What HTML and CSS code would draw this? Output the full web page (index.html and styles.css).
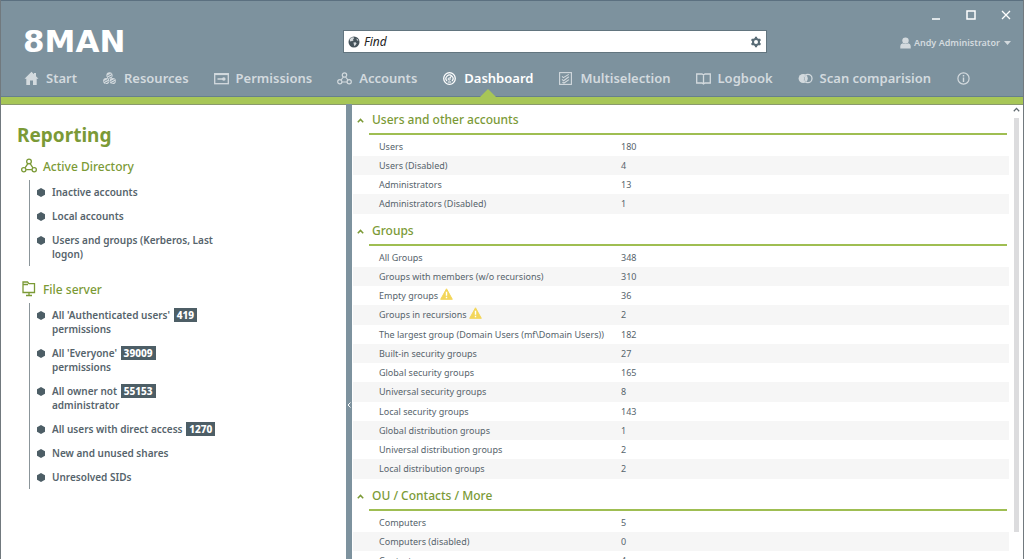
FILE: index.html
```html
<!DOCTYPE html>
<html lang="en">
<head>
    <meta charset="UTF-8">
    <meta name="viewport" content="width=device-width, initial-scale=1.0">
    <title>8MAN - Dashboard</title>
    <link rel="stylesheet" href="styles.css">
</head>
<body>
    <header class="header">
        <div class="window-controls">
            <button type="button" aria-label="Minimize"><svg width="10" height="10" viewBox="0 0 10 10"><path d="M1 9H9" stroke="#fff" stroke-width="1.5"/></svg></button>
            <button type="button" aria-label="Maximize"><svg width="10" height="10" viewBox="0 0 10 10"><rect x="1" y="1" width="8" height="8" fill="none" stroke="#fff" stroke-width="1.5"/></svg></button>
            <button type="button" aria-label="Close"><svg width="10" height="10" viewBox="0 0 10 10"><path d="M1 1L9 9M9 1L1 9" stroke="#fff" stroke-width="1.3"/></svg></button>
        </div>

        <div class="header-row">
            <div class="logo">8MAN</div>
            <form class="search">
                <svg width="12" height="12" viewBox="0 0 12 12"><circle cx="6" cy="6" r="5.5" fill="#46545b"/><path d="M1.5 3.6L3.4 1.4L5.6 1.2L6.2 2.2L5 3.2L5.6 4.2L4 5.2L3 5L2.4 5.8ZM5.4 6.4L7.6 6.2L8.6 7.4L7.2 9.6L6.2 10L5.8 8ZM8.4 2.4L10 3.4L10.4 4.8L9 4.6Z" fill="#d5dadd"/></svg>
                <input type="text" placeholder="Find" aria-label="Find">
                <button type="button" aria-label="Search settings"><svg width="12" height="12" viewBox="0 0 12 12"><g stroke="#596c76" fill="none"><circle cx="6" cy="6" r="3" stroke-width="2"/><path d="M6 .8V3M6 9V11.2M1.5 3.4L3.4 4.5M8.6 7.5L10.5 8.6M1.5 8.6L3.4 7.5M8.6 4.5L10.5 3.4" stroke-width="2.2"/></g></svg></button>
            </form>
            <button type="button" class="user">
                <svg width="11" height="12" viewBox="0 0 11 12"><circle cx="5.5" cy="3.6" r="3.2" fill="#d3dade"/><path d="M.3 11.5V9Q.3 6.6 2.8 6.2Q5.5 8 8.2 6.2Q10.7 6.6 10.7 9V11.5Z" fill="#d3dade"/></svg>
                Andy Administrator
                <svg class="caret" width="7" height="4" viewBox="0 0 7 4"><path d="M0 0H7L3.5 4Z" fill="#d3dade"/></svg>
            </button>
        </div>

        <nav class="nav">
            <a href="#"><svg width="15" height="15" viewBox="0 0 15 15"><path d="M7.5 .8L10 3.2V2H12V5.2L14.5 7.8H12.7V14H9V9.5H6V14H2.3V7.8H.5Z" fill="currentColor"/></svg>Start</a>
            <a href="#"><svg width="15" height="15" viewBox="0 0 15 15"><g fill="currentColor"><circle cx="7.5" cy="4.4" r="3.1"/><circle cx="4.2" cy="10" r="3.1"/><circle cx="10.8" cy="10" r="3.1"/></g><path d="M5.2 5L9.4 2.8M6 6.8L10 4.8M1.8 10.6L6 8.4M2.8 12.4L6.6 10.4M8.4 10.6L12.6 8.4M9.4 12.4L13.2 10.4" stroke="#7d929e" stroke-width=".9"/></svg>Resources</a>
            <a href="#"><svg width="15" height="15" viewBox="0 0 15 15"><rect x=".7" y="2.7" width="13.6" height="10" fill="none" stroke="currentColor" stroke-width="1.3"/><path d="M.5 3.3H14.5" stroke="currentColor" stroke-width="1.6"/><path d="M3.5 8H9" stroke="currentColor" stroke-width="1.5"/><circle cx="9.8" cy="8" r="1.8" fill="currentColor"/></svg>Permissions</a>
            <a href="#"><svg width="15" height="15" viewBox="0 0 15 15"><g fill="none" stroke="currentColor" stroke-width="1.2"><circle cx="7.5" cy="4" r="2.2"/><circle cx="2.8" cy="10.8" r="2.1"/><circle cx="12.2" cy="10.8" r="2.1"/><path d="M6.4 6L4 9M8.6 6L11 9M5 11H10"/></g></svg>Accounts</a>
            <a href="#" class="active"><svg width="15" height="15" viewBox="0 0 15 15"><g fill="none" stroke="currentColor"><circle cx="7.5" cy="7.5" r="5.8" stroke-width="1.3"/><path d="M5 10A3.5 3.5 0 1 1 10 10" stroke-width="1.2"/><circle cx="7.2" cy="8" r="1.1"/><path d="M8 7L9.4 5.2M5.8 11H9.2" stroke-width="1.1"/></g></svg>Dashboard</a>
            <a href="#"><svg width="15" height="15" viewBox="0 0 15 15"><g fill="none" stroke="currentColor" stroke-width="1.1"><rect x="1.6" y="1.6" width="11.8" height="11.8"/><path d="M4 5.4L5.4 6.6L10.8 3.4M4 8.4L5.6 9.8L10.8 5.8M4.4 11.2L6 12L11 8.6"/></g></svg>Multiselection</a>
            <a href="#"><svg width="15" height="15" viewBox="0 0 15 15"><path d="M.7 3H6L7.5 4L9 3H14.3V12H9L7.5 13L6 12H.7ZM7.5 4V13" fill="none" stroke="currentColor" stroke-width="1.3"/></svg>Logbook</a>
            <a href="#"><svg width="15" height="15" viewBox="0 0 15 15"><circle cx="5.2" cy="7.5" r="4.6" fill="currentColor"/><path d="M8 3.5Q6 5 6 7.5T8 11.5" fill="none" stroke="#7d929e" stroke-width="1.2"/><circle cx="9.8" cy="7.5" r="4.2" fill="none" stroke="currentColor" stroke-width="1.3"/></svg>Scan comparision</a>
            <a href="#" aria-label="Info"><svg width="15" height="15" viewBox="0 0 15 15"><circle cx="7.5" cy="7.5" r="5.6" fill="none" stroke="currentColor" stroke-width="1.2"/><path d="M7.5 4V5.4M7.5 6.5V11" stroke="currentColor" stroke-width="1.4"/></svg></a>
        </nav>
    </header>

    <div class="main">
        <aside class="sidebar">
            <h1>Reporting</h1>

            <h2><svg width="16" height="16" viewBox="0 0 15 15"><g fill="none" stroke="currentColor" stroke-width="1.2"><circle cx="7.5" cy="3.2" r="2.2"/><circle cx="2.6" cy="11" r="2"/><circle cx="12.4" cy="11" r="2"/><path d="M6.4 5.2L3.8 9.2M8.6 5.2L11.2 9.2M4.8 11H10.2"/></g></svg>Active Directory</h2>
            <ul class="reports">
                <li><a href="#">Inactive accounts</a></li>
                <li><a href="#">Local accounts</a></li>
                <li><a href="#">Users and groups (Kerberos, Last<br>logon)</a></li>
            </ul>

            <h2><svg width="16" height="16" viewBox="0 0 16 16"><g fill="none" stroke="currentColor" stroke-width="1.3"><path d="M2 11.5V1H6.5L8 2.7H13.5V11.5ZM2 3.5H7M8 11.5V14.5M5 14.5H11"/></g></svg>File server</h2>
            <ul class="reports">
                <li><a href="#">All 'Authenticated users' <span class="count">419</span><br>permissions</a></li>
                <li><a href="#">All 'Everyone' <span class="count">39009</span><br>permissions</a></li>
                <li><a href="#">All owner not <span class="count">55153</span><br>administrator</a></li>
                <li><a href="#">All users with direct access <span class="count">1270</span></a></li>
                <li><a href="#">New and unused shares</a></li>
                <li><a href="#">Unresolved SIDs</a></li>
            </ul>
        </aside>

        <button type="button" class="splitter" aria-label="Collapse sidebar"><svg width="4" height="6" viewBox="0 0 4 6"><path d="M3.5 .5L1 3L3.5 5.5" fill="none" stroke="#fff"/></svg></button>

        <main class="content">
            <details class="group" open>
                <summary><svg width="7" height="5" viewBox="0 0 7 5"><path d="M.8 4.2L3.5 1.4L6.2 4.2" fill="none" stroke="currentColor" stroke-width="1.5"/></svg><h2>Users and other accounts</h2></summary>
                <table>
                    <tr><th scope="row">Users</th><td>180</td></tr>
                    <tr><th scope="row">Users (Disabled)</th><td>4</td></tr>
                    <tr><th scope="row">Administrators</th><td>13</td></tr>
                    <tr><th scope="row">Administrators (Disabled)</th><td>1</td></tr>
                </table>
            </details>

            <details class="group" open>
                <summary><svg width="7" height="5" viewBox="0 0 7 5"><path d="M.8 4.2L3.5 1.4L6.2 4.2" fill="none" stroke="currentColor" stroke-width="1.5"/></svg><h2>Groups</h2></summary>
                <table>
                    <tr><th scope="row">All Groups</th><td>348</td></tr>
                    <tr><th scope="row">Groups with members (w/o recursions)</th><td>310</td></tr>
                    <tr><th scope="row">Empty groups <svg class="warning" width="13" height="12" viewBox="0 0 13 12"><path d="M6.5 .8L12.3 11.3H.7Z" fill="#f3d659" stroke="#f3d659" stroke-linejoin="round"/><path d="M6.5 3.8V7.8M6.5 8.8V10.3" stroke="#fff" stroke-width="1.4"/></svg></th><td>36</td></tr>
                    <tr><th scope="row">Groups in recursions <svg class="warning" width="13" height="12" viewBox="0 0 13 12"><path d="M6.5 .8L12.3 11.3H.7Z" fill="#f3d659" stroke="#f3d659" stroke-linejoin="round"/><path d="M6.5 3.8V7.8M6.5 8.8V10.3" stroke="#fff" stroke-width="1.4"/></svg></th><td>2</td></tr>
                    <tr><th scope="row">The largest group (Domain Users (mf\Domain Users))</th><td>182</td></tr>
                    <tr><th scope="row">Built-in security groups</th><td>27</td></tr>
                    <tr><th scope="row">Global security groups</th><td>165</td></tr>
                    <tr><th scope="row">Universal security groups</th><td>8</td></tr>
                    <tr><th scope="row">Local security groups</th><td>143</td></tr>
                    <tr><th scope="row">Global distribution groups</th><td>1</td></tr>
                    <tr><th scope="row">Universal distribution groups</th><td>2</td></tr>
                    <tr><th scope="row">Local distribution groups</th><td>2</td></tr>
                </table>
            </details>

            <details class="group" open>
                <summary><svg width="7" height="5" viewBox="0 0 7 5"><path d="M.8 4.2L3.5 1.4L6.2 4.2" fill="none" stroke="currentColor" stroke-width="1.5"/></svg><h2>OU / Contacts / More</h2></summary>
                <table>
                    <tr><th scope="row">Computers</th><td>5</td></tr>
                    <tr><th scope="row">Computers (disabled)</th><td>0</td></tr>
                    <tr><th scope="row">Contacts</th><td>4</td></tr>
                </table>
            </details>
        </main>

        <div class="scrollbar">
            <svg width="7" height="5" viewBox="0 0 7 5"><path d="M.8 4.2L3.5 1.4L6.2 4.2" fill="none" stroke="#606a70" stroke-width="1.3"/></svg>
            <div class="thumb"></div>
        </div>
    </div>
</body>
</html>
```
FILE: styles.css
```css
* {
    box-sizing: border-box;
}
body {
    display: flex;
    flex-direction: column;
    height: 100vh;
    margin: 0;
    overflow: hidden;
    border: solid #71797e;
    border-width: 0 1px;
    background-color: #fff;
    color: #56646c;
    font-family: "Noto Sans", "Open Sans", sans-serif;
    font-size: 11px;
}
h1, h2, ul {
    margin: 0;
    padding: 0;
}
svg {
    flex: none;
}
a {
    color: inherit;
    text-decoration: none;
}
button {
    padding: 0;
    border: none;
    background: none;
    color: inherit;
    font: inherit;
    cursor: pointer;
}

/* Header */
.header {
    flex: none;
    border-top: 1px solid #5b7080;
    border-bottom: 7px solid #a7c657;
    background-color: #7d929e;
    box-shadow: inset 0 -1px #66808c, 0 1px #8a9a6c;
    color: #d3dade;
}
.window-controls {
    display: flex;
    justify-content: flex-end;
    height: 29px;
}
.window-controls button {
    width: 35px;
}
.header-row {
    display: grid;
    grid-template-columns: 320px minmax(0, 1fr) 244px;
    align-items: center;
    height: 23px;
    padding: 0 12px 0 22px;
}
.logo {
    color: #fff;
    font-family: "DejaVu Sans", sans-serif;
    font-size: 31px;
    font-weight: bold;
    line-height: 23px;
}
.search {
    display: flex;
    align-items: center;
    gap: 4px;
    height: 23px;
    padding: 0 4px;
    border: 1px solid #62757f;
    background-color: #fff;
}
.search input {
    flex: 1;
    min-width: 0;
    padding: 0;
    border: none;
    outline: none;
    font-family: inherit;
    font-size: 12px;
    font-style: italic;
}
.search input::placeholder {
    color: #222;
}
.search button {
    display: flex;
}
.user {
    display: flex;
    align-items: center;
    justify-self: end;
    gap: 3px;
    padding-top: 2px;
    font-size: 9px;
    font-weight: 600;
}
.caret {
    margin-left: 1px;
}
.nav {
    display: flex;
    gap: 25px;
    height: 44px;
    padding: 7px 0 0 23px;
    font-size: 13px;
    font-weight: 600;
    white-space: nowrap;
}
.nav a {
    position: relative;
    display: flex;
    align-items: center;
    gap: 7px;
    height: 36px;
}
.nav .active {
    color: #fff;
}
.nav .active::after {
    content: "";
    position: absolute;
    bottom: -1px;
    left: 50%;
    margin-left: -8px;
    border: 8px solid transparent;
    border-top: none;
    border-bottom-color: #a7c657;
}

/* Main area */
.main {
    display: flex;
    flex: 1;
    min-height: 0;
}
.sidebar {
    width: 345px;
    padding: 17px 16px;
}
.sidebar h1 {
    margin-bottom: 3px;
    color: #7b9a36;
    font-size: 19px;
    line-height: 28px;
}
.sidebar h2 {
    display: flex;
    align-items: center;
    gap: 6px;
    height: 28px;
    padding-left: 4px;
    color: #7b9a36;
    font-size: 12px;
    font-weight: 500;
}
.reports {
    margin: 0 0 9px 12px;
    border-left: 1px solid #8b959a;
    list-style: none;
    font-size: 10px;
    font-weight: 600;
    line-height: 14px;
    white-space: nowrap;
}
.reports li {
    display: flex;
    gap: 7px;
    padding: 5px 0 5px 7px;
}
.reports li::before {
    content: "";
    width: 8px;
    height: 9px;
    margin-top: 3px;
    background-color: #4d5e66;
    clip-path: polygon(50% 0, 100% 25%, 100% 75%, 50% 100%, 0 75%, 0 25%);
}
.count {
    display: inline-block;
    margin-left: 1px;
    padding: 0 3px;
    background-color: #4d5e66;
    color: #fff;
    font-weight: 800;
}
.splitter {
    display: flex;
    align-items: center;
    justify-content: center;
    width: 6px;
    padding-top: 146px;
    background-color: #7d929e;
}

.content {
    flex: 1;
    min-width: 0;
    overflow: hidden;
    padding: 1px 0 0 1px;
}
.group {
    margin-bottom: 2px;
}
.group summary {
    display: flex;
    align-items: center;
    gap: 5px;
    padding: 0 2px 0 4px;
    margin-bottom: 2px;
    color: #7b9a36;
    list-style: none;
    cursor: pointer;
}
.group h2 {
    flex: 1;
    padding: 2px 3px 0;
    border-bottom: 2px solid #9fbe52;
    font-size: 12px;
    font-weight: 500;
    line-height: 26px;
}
.group table {
    width: 100%;
    border-collapse: collapse;
    table-layout: fixed;
    font-size: 9px;
    line-height: 19px;
    white-space: nowrap;
}
.group tr:nth-child(even) {
    background-color: #f6f6f6;
}
.group tr:nth-child(4n) {
    line-height: 20px;
}
.group th, .group td {
    padding: 0;
    text-align: left;
    font-weight: normal;
}
.group th {
    width: 268px;
    padding-left: 26px;
}
.warning {
    vertical-align: -1px;
}
.scrollbar {
    display: flex;
    flex: none;
    flex-direction: column;
    align-items: center;
    gap: 6px;
    width: 14px;
    padding: 3px 0 27px;
}
.thumb {
    flex: 1;
    width: 5px;
    background-color: #dcdcde;
}
```
